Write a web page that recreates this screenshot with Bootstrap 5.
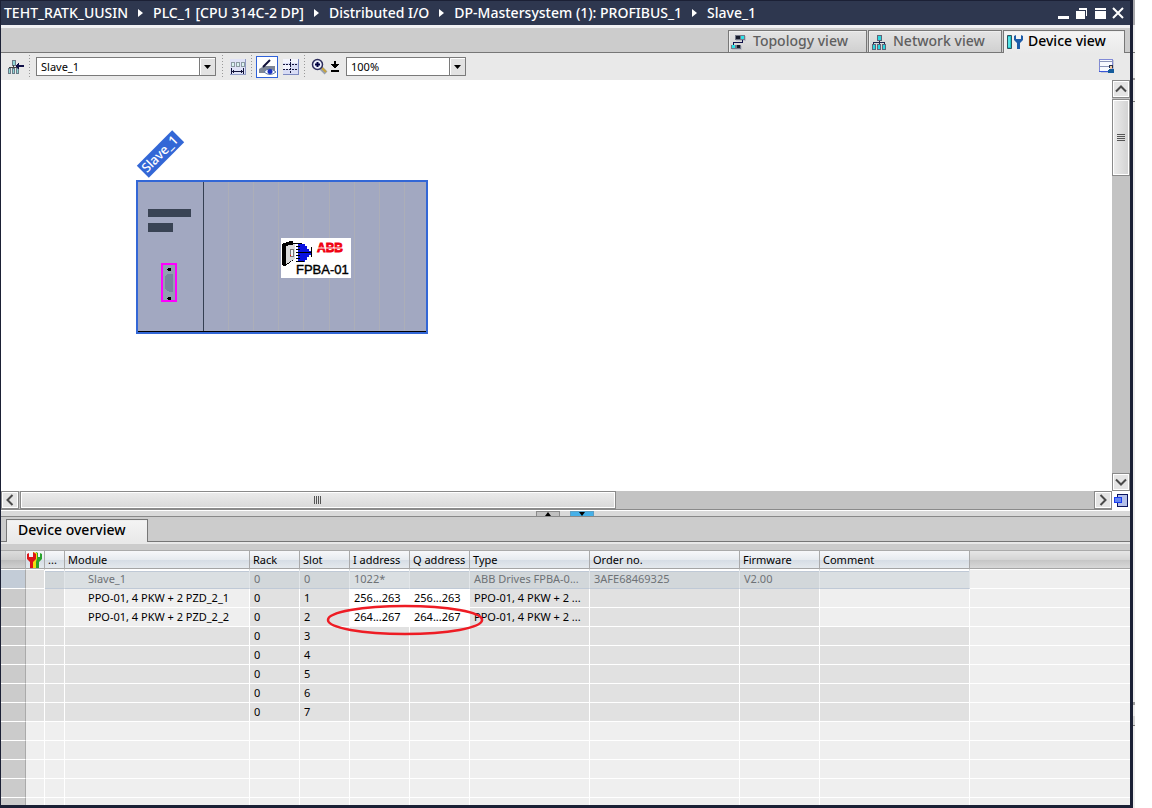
<!DOCTYPE html>
<html lang="en">
<head>
<meta charset="utf-8">
<meta name="viewport" content="width=device-width, initial-scale=1">
<title>Slave_1 - Device view</title>
<link href="https://cdn.jsdelivr.net/npm/bootstrap@5.3.0/dist/css/bootstrap.min.css" rel="stylesheet">
<style>
  body { font-family: "Noto Sans", "Open Sans", sans-serif; font-size: 11px; line-height: 16px; color: #000; background: #fff; }
  svg { display: block; flex: none; }
  a { color: inherit; text-decoration: none; }
  button { border: 0; padding: 0; background: none; color: inherit; flex: none; }
  .editor { border: solid #1b2035; border-width: 1px 3px 3px 1px; min-width: 0; }
  .behind { width: 2px; margin-right: 17px; background: linear-gradient(#a8a8ac 0 25px, #ededed 25px 52px, #777 52px 53px, #ededed 53px 78px, #999 78px 80px, #ededed 80px 101px, #777 101px 102px, #ededed 102px 702px, #999 702px 705px, #ededed 705px 716px, #d4d4d4 716px 725px, #777 725px 726px, #ededed 726px); }
  .titlebar { height: 24px; background: #2e374f; color: #fff; font-size: 14px; font-weight: 500; padding: 0 5px 0 3px; }
  .titlebar .crumbs { gap: 10px; white-space: nowrap; }
  .titlebar .winbtns { gap: 4px; }
  .lightline { height: 3px; background: #f1f1f3; flex: none; }
  .tabbar { height: 25px; background: #ccc; border-bottom: 1px solid #777; gap: 1px; padding: 0 5px; flex: none; }
  .viewtab { height: 22px; border: 1px solid #777; border-bottom: 0; font-size: 14px; font-weight: 500; color: #5f5f5f; background: linear-gradient(#e4e4e4, #d0d0d0); box-shadow: inset 1px 1px #eee; padding: 0 0 2px 1px; gap: 5px; white-space: nowrap; }
  .viewtab.active { height: 23px; margin-bottom: -1px; color: #000; background: linear-gradient(#f4f4f4, #e9e9e9); }
  .t-topo { width: 139px; } .t-net { width: 134px; } .t-dev { width: 122px; }
  .t-over { width: 142px; padding-left: 11px; }
  .tools { height: 27px; background: #e9e9e9; gap: 2px; padding: 0 12px 0 4px; flex: none; }
  .tool { width: 22px; height: 22px; display: flex; align-items: center; justify-content: center; }
  .tool.pressed { border: 1px solid #2f62d9; background: #fff; }
  .tool.slim { width: 20px; } .tool.tiny { width: 11px; justify-content: flex-start; }
  .sep { width: 1px; height: 23px; margin-right: 2px; background: repeating-linear-gradient(#999 0 1px, transparent 1px 3px); }
  .combo { position: relative; margin: 0 4px 0 2px; }
  .combo select { appearance: none; width: 100%; height: 19px; border: 1px solid #7a7a7a; border-radius: 0; background: #fff; padding: 0 18px 0 4px; font-size: 11px; line-height: 16px; color: #000; display: block; }
  .combo svg { position: absolute; right: 0; top: 0; pointer-events: none; }
  .c-dev { width: 180px; } .c-zoom { width: 120px; }
  .workspace { flex: 411 1 0; min-height: 0; }
  .canvas { position: relative; background: #fff; overflow: hidden; }
  .node { position: absolute; left: 129px; top: 45px; }
  .track { background: #c3c3c3; flex: none; }
  .vbar { width: 18px; } .hbar { height: 19px; border-bottom: 1px solid #8a8a8a; }
  .sbtn, .thumb { border: 1px solid #8a8a8a; box-shadow: inset 0 0 0 1px #fff; background: #e4e4e4; display: flex; align-items: center; justify-content: center; }
  .sbtn { width: 18px; height: 18px; }
  .vbar .thumb { height: 77px; margin-top: 1px; background: linear-gradient(90deg, #ececec, #d2d2d2); }
  .hbar .thumb { width: 596px; height: 18px; margin-left: 1px; background: linear-gradient(#ececec, #d8d8d8); }
  .corner { width: 18px; height: 19px; background: #fff; }
  .splitter { height: 7px; border-top: 1px solid #fff; border-bottom: 1px solid #888; background: #d9d9d9; padding-left: 535px; gap: 10px; flex: none; }
  .splitter button { width: 24px; height: 5px; border: solid #8a8a8a; border-width: 1px 1px 0; background: #c0c0c0; display: flex; justify-content: center; }
  .splitter .down { background: #45b0e8; border-color: #5c9fc4; }
  .strip { height: 8px; background: #ccc; border-top: 2px solid #e9e9e9; flex: none; }
  .overview { flex: 255 1 0; min-height: 0; overflow: hidden; position: relative; background: #efefef; }
  .devices { table-layout: fixed; width: 100%; border-collapse: separate; border-spacing: 0; white-space: nowrap; }
  .devices th { height: 20px; padding: 0 0 0 3px; font-weight: 400; border: solid #aaa; border-width: 1px 1px 1px 0; border-bottom: 1px solid #fff; box-shadow: inset 0 -1px #a5a5a5; background: linear-gradient(#f7f8fa, #e6eaef 50%, #d6dde5 51%, #e6eaee); }
  .devices th.plain { background: linear-gradient(#e6e6e6, #d4d4d4 50%, #c6c6c6 51%, #dadada); border-right-width: 0; }
  .devices th:first-child { border-right-width: 1px; background: linear-gradient(#dcdcdc, #ccc 50%, #bdbdbd 51%, #d2d2d2); }
  .devices th.picto { padding: 0; }
  .devices td { height: 19px; padding: 0 0 0 4px; line-height: 16px; background: #e1e1e1; border: solid #fff; border-width: 0 1px 1px 0; }
  .devices td:nth-child(4) { padding-left: 23px; }
  .devices td:first-child { background: #cbcbcb; border-right-color: #aaa; }
  .devices td:last-child, .devices .free td:not(:first-child), .devices td.soft { background: #efefef; }
  .devices td:last-child { border-right: 0; }
  .devices td.edit { background: #fff; }
  .devices .head td { color: #6e7276; }
  .devices .head td:first-child { background: #c3ccd7; }
  .devices .head td:nth-child(n+3):not(:last-child) { background: #d2d7da; border-color: #bfc9d6; border-right-color: #e2e6e9; box-shadow: inset 0 1px #fff, inset 0 2px #bfc9d6; }
  .devices .head td.soft:not(:last-child) { background: #dadfe2; }
  .marker { position: absolute; left: 325px; top: 52px; pointer-events: none; }
</style>
</head>
<body>
<div class="d-flex vh-100 overflow-hidden">
<main class="editor d-flex flex-column flex-grow-1">
  <header class="titlebar d-flex align-items-center justify-content-between flex-shrink-0">
    <nav class="crumbs d-flex align-items-center" aria-label="Path">
      <a href="#">TEHT_RATK_UUSIN</a>
      <svg width="5" height="8"><path d="M0 0L5 4L0 8Z" fill="#fff"/></svg>
      <a href="#">PLC_1 [CPU 314C-2 DP]</a>
      <svg width="5" height="8"><path d="M0 0L5 4L0 8Z" fill="#fff"/></svg>
      <a href="#">Distributed I/O</a>
      <svg width="5" height="8"><path d="M0 0L5 4L0 8Z" fill="#fff"/></svg>
      <a href="#">DP-Mastersystem (1): PROFIBUS_1</a>
      <svg width="5" height="8"><path d="M0 0L5 4L0 8Z" fill="#fff"/></svg>
      <a href="#">Slave_1</a>
    </nav>
    <div class="winbtns d-flex">
      <button aria-label="Minimize"><svg width="14" height="12"><path d="M1 9h11v3H1z" fill="#fff"/></svg></button>
      <button aria-label="Restore"><svg width="14" height="12" fill="#fff"><path d="M1 4h9v8H1z"/><path d="M4 1h8v8h-1V3H4z"/></svg></button>
      <button aria-label="Maximize"><svg width="14" height="12" fill="#fff"><path d="M2 1h11v2H2zM2 4h11v8H2z"/></svg></button>
      <button aria-label="Close"><svg width="14" height="12"><path d="M2 1l10 10M12 1L2 11" stroke="#fff" stroke-width="2"/></svg></button>
    </div>
  </header>
  <div class="lightline"></div>

  <div class="tabbar d-flex justify-content-end align-items-end" role="tablist">
    <button class="viewtab t-topo d-flex align-items-center" role="tab">
      <svg width="18" height="18" shape-rendering="crispEdges"><path d="M6 4h10v5H6zM2 14h10v4H2z" fill="#bfc1c9"/><path d="M5 3h10v5H5zM1 13h10v4H1z" fill="#747988"/><path d="M6 4h4v3H6zM7 13h3v3H7z" fill="#171b2b"/><path d="M11 4h3v3h-3zM2 13h3v3H2z" fill="#2be0e6"/><path d="M12.500 8v2.500h-9V13" fill="none" stroke="#10104a"/></svg>
      Topology view</button>
    <button class="viewtab t-net d-flex align-items-center" role="tab">
      <svg width="18" height="18" shape-rendering="crispEdges"><path d="M7 3h5v6H7zM2 12h4v6H2zM7 12h4v6H7zM12 12h4v6h-4z" fill="#5d6479"/><path d="M8 4h3v4H8zM3 13h2v4H3zM8 13h2v4H8zM13 13h2v4h-2z" fill="#2bd5dd"/><path d="M9.500 9v3M3.500 12v-1.500h11V12" fill="none" stroke="#20264c"/></svg>
      Network view</button>
    <button class="viewtab active t-dev d-flex align-items-center" role="tab" aria-selected="true">
      <svg width="18" height="18"><path d="M2.500 3.500h4v13h-4z" fill="#21c6cb" stroke="#2c5360"/><path d="M4 5v10" stroke="#8ff"/><path d="M9 4v4l3 3v6h3v-6l3-3V4l-2-1v4h-5V3z" fill="#1c5ba8"/></svg>
      Device view</button>
  </div>

  <div class="tools d-flex align-items-center">
    <button class="tool" aria-label="Network overview"><svg width="16" height="16" shape-rendering="crispEdges"><path d="M4 1h4v6H4zM0 9h3v6H0zM4 9h3v6H4zM8 9h3v6H8z" fill="#697b88"/><path d="M5 2h2v4H5zM1 10h1v4H1zM5 10h1v4H5zM9 10h1v4H9z" fill="#8fd6d6"/><path d="M1.500 9V8.500h8M5.500 6v3" stroke="#444" fill="none"/><path d="M7 7l4-4v3h5v2h-5v3z" fill="#101048"/></svg></button>
    <span class="sep"></span>
    <div class="combo c-dev"><select aria-label="Device"><option>Slave_1</option></select><svg width="17" height="19"><path d="M.5.5h16v18H.5z" fill="#e2e2e2" stroke="#7a7a7a"/><path d="M1.500 18V1.500H16" stroke="#fff" fill="none"/><path d="M5 8h7l-3.500 4z"/></svg></div>
    <span class="sep"></span>
    <button class="tool" aria-label="Show addresses"><svg width="16" height="16" shape-rendering="crispEdges"><path d="M0 0h15v15H0z" fill="#dfe2f7"/><path d="M15.500 0v16M0 15.500h16" stroke="#8f9ac4"/><path d="M1 3h4v5H1zM6 3h4v5H6zM11 3h4v5h-4z" fill="#8d9aa3"/><path d="M2 4h2v3H2zM7 4h2v3H7zM12 4h2v3h-2z" fill="#d9f2f0"/><path d="M1.500 9v6M13.500 9v6M2 12.500h12M3.500 11v3M11.500 11v3" stroke="#14143c"/></svg></button>
    <span class="sep"></span>
    <button class="tool pressed" aria-label="Show labels"><svg width="18" height="18"><path d="M1 11l5-3h11v7H1z" fill="#7f8796"/><path d="M12 2L5 9" stroke="#101038" stroke-width="2"/><path d="M6 14q5-6 12 0q-6 5-12 0z" fill="#fff" stroke="#5e79a8"/><circle cx="12" cy="13.500" r="2.500" fill="#1a2fc0"/></svg></button>
    <button class="tool" aria-label="Show grid"><svg width="16" height="16" shape-rendering="crispEdges"><path d="M0 0h16v16H0z" fill="#d8dcf5"/><path d="M0 0h7v4H0zM8 0h7v4H8zM0 6h7v4H0z" fill="#f3f4fd"/><path d="M7.500 0v16M0 5.500h16M0 10.500h16" stroke="#15153f" stroke-dasharray="2 1"/><path d="M15.500 0v16M0 15.500h16" stroke="#7d89c0"/></svg></button>
    <span class="sep"></span>
    <button class="tool slim" aria-label="Zoom"><svg width="17" height="17"><path d="M10 10l5 5" stroke="#98a0ae" stroke-width="4"/><path d="M11 10l4 4" stroke="#c9a43a" stroke-width="2"/><circle cx="6.500" cy="6.500" r="5" fill="#edf0fd" stroke="#2d2d5c" stroke-width="1.500"/><path d="M4 6.500h5M6.500 4v5" stroke="#000040" stroke-width="2"/></svg></button>
    <button class="tool tiny" aria-label="Zoom steps"><svg width="8" height="12" shape-rendering="crispEdges"><path d="M3 0h2v3h3v1H7v1H6v1H5v1H3V6H2V5H1V4H0V3h3zM0 9h8v2H0z"/></svg></button>
    <div class="combo c-zoom"><select aria-label="Zoom factor"><option>100%</option></select><svg width="17" height="19"><path d="M.5.5h16v18H.5z" fill="#e2e2e2" stroke="#7a7a7a"/><path d="M1.500 18V1.500H16" stroke="#fff" fill="none"/><path d="M5 8h7l-3.500 4z"/></svg></div>
    <button class="tool ms-auto" aria-label="Save window settings"><svg width="17" height="17" shape-rendering="crispEdges"><path d="M2 2h13v13H2z" fill="#c4c8d4"/><path d="M.5 1.500h13v12H.5z" fill="#f8f9ff" stroke="#8089d6"/><path d="M0 3.500h14M0 8.500h14" stroke="#8a93b8"/><path d="M0 13h14v1H0z" fill="#3a56d8"/><path d="M10 11h5v4H9v-3z" fill="#155c9c"/><path d="M10 7h4v3h-4z" fill="#262f4c"/><path d="M11 8h2v3h-2z" fill="#f0c9a0"/></svg></button>
  </div>

  <section class="workspace d-flex">
    <div class="canvas flex-grow-1">
      <svg class="node" width="305" height="215" viewBox="130 125 305 215">
        <g transform="rotate(-45 160.500 154)"><path d="M135.500 145.500h50v17h-50z" fill="#3367d6"/><text x="160" y="158" fill="#fff" font-size="13" font-weight="500" text-anchor="middle">Slave_1</text></g>
        <g shape-rendering="crispEdges">
          <path d="M137 181h290v152H137z" fill="#a2a8c1" stroke="#3367d6" stroke-width="2"/>
          <path d="M228.500 182v149M253.500 182v149M278.500 182v149M303.500 182v149M329.500 182v149M354.500 182v149M379.500 182v149M404.500 182v149" stroke="#acaeb8"/>
          <path d="M203.500 182v149" stroke="#353f52"/><path d="M138 331.500h288" stroke="#000"/>
          <path d="M148 209h43v8h-43zM148 223h25v9h-25z" fill="#394354"/>
          <path d="M162 264h14v37h-14z" fill="#91a0b0" stroke="#f0f" stroke-width="2"/>
          <path d="M168 268h3v3h-3zM168 297h3v3h-3zM167 269h1v1h-1zM167 298h1v1h-1z"/><path d="M167 274h6v18h-3l-5-3v-13z" fill="#76869c"/>
          <path d="M281 238h70v40h-70z" fill="#fff"/>
          <path d="M282 244l8-3h3v2h2v16l-10 7h-2l-1-3z"/>
          <path d="M286 246l9-2v15l-9 5z" fill="#dadada"/><path d="M290 249h3v7h-3z" fill="#f4f4f4" stroke="#777"/><path d="M290 255h1v1h-1z" fill="red"/>
          <path d="M298 244h7v2h2v3h2v2h2v4h-2v2h-2v3h-2v2h-7z" fill="#0a12e0"/>
          <path d="M294 243.500h8M296 246.500h4M296 249.500h4M296 252.500h15M296 255.500h4M296 258.500h4M296 261.500h8" stroke="#000"/><path d="M311.500 247v10" stroke="#000"/>
        </g>
        <text x="317" y="252" fill="#f00010" stroke="#f00010" stroke-width=".8" font-family="Liberation Sans, sans-serif" font-size="12" font-weight="700">ABB</text>
        <path d="M316 248h29" stroke="#fff"/>
        <text x="296" y="274" font-family="Liberation Sans, sans-serif" font-size="13" stroke="#000" stroke-width=".4">FPBA-01</text>
      </svg>
    </div>
    <div class="track vbar d-flex flex-column">
      <button class="sbtn" aria-label="Scroll up"><svg width="12" height="8"><path d="M1 6.500l5-5 5 5" fill="none" stroke="#4a4a4a" stroke-width="2"/></svg></button>
      <div class="thumb"><svg width="8" height="8" shape-rendering="crispEdges"><path d="M0 .5h8M0 2.500h8M0 4.500h8M0 6.500h8" stroke="#555"/></svg></div>
      <button class="sbtn mt-auto" aria-label="Scroll down"><svg width="12" height="8"><path d="M1 1.500l5 5 5-5" fill="none" stroke="#4a4a4a" stroke-width="2"/></svg></button>
    </div>
  </section>
  <div class="d-flex flex-shrink-0">
    <div class="track hbar d-flex flex-fill">
      <button class="sbtn" aria-label="Scroll left"><svg width="8" height="12"><path d="M6.500 1l-5 5 5 5" fill="none" stroke="#4a4a4a" stroke-width="2"/></svg></button>
      <div class="thumb"><svg width="8" height="8" shape-rendering="crispEdges"><path d="M.5 0v8M2.500 0v8M4.500 0v8M6.500 0v8" stroke="#555"/></svg></div>
      <button class="sbtn ms-auto" aria-label="Scroll right"><svg width="8" height="12"><path d="M1.500 1l5 5-5 5" fill="none" stroke="#4a4a4a" stroke-width="2"/></svg></button>
    </div>
    <button class="corner" aria-label="Navigator"><svg width="18" height="18" shape-rendering="crispEdges"><path d="M5.500 2.500h10v12h-10z" fill="#b4c0ea" stroke="#0b1560"/><path d="M2.500 5.500h7v5h-7z" fill="#6485f0" stroke="#1a3df0"/></svg></button>
  </div>
  <div class="splitter d-flex">
    <button aria-label="Collapse up"><svg width="6" height="4"><path d="M0 4l3-4 3 4z"/></svg></button>
    <button class="down" aria-label="Collapse down"><svg width="6" height="4"><path d="M0 0l3 4 3-4z"/></svg></button>
  </div>
  <div class="tabbar d-flex align-items-end"><button class="viewtab active t-over d-flex align-items-center" role="tab" aria-selected="true">Device overview</button></div>
  <div class="strip"></div>

  <section class="overview">
    <table class="devices">
      <colgroup><col style="width:25px"><col style="width:19px"><col style="width:20px"><col style="width:185px"><col style="width:50px"><col style="width:50px"><col style="width:60px"><col style="width:60px"><col style="width:120px"><col style="width:150px"><col style="width:80px"><col style="width:150px"><col></colgroup>
      <thead><tr><th></th><th class="picto" aria-label="Status"><svg width="18" height="18"><path d="M10 1l2 1v4h2V2l2 1v5l-3 3v6h-4V8z" fill="#2aa32c"/><path d="M7 1l4 1v5l-1 4v6H7z" fill="#f2dc10"/><path d="M1 3l2-1v4h4V1l3 2v5l-3 3v6H4v-6L1 8z" fill="#dc1418"/></svg></th><th>...</th><th>Module</th><th>Rack</th><th>Slot</th><th>I address</th><th>Q address</th><th>Type</th><th>Order no.</th><th>Firmware</th><th>Comment</th><th class="plain"></th></tr></thead>
      <tbody>
        <tr class="head"><td></td><td></td><td></td><td class="soft">Slave_1</td><td>0</td><td>0</td><td class="soft">1022*</td><td></td><td>ABB Drives FPBA-0...</td><td>3AFE68469325</td><td>V2.00</td><td class="soft"></td><td></td></tr>
        <tr><td></td><td></td><td></td><td class="soft">PPO-01, 4 PKW + 2 PZD_2_1</td><td>0</td><td>1</td><td class="edit">256...263</td><td class="edit">256...263</td><td>PPO-01, 4 PKW + 2 ...</td><td></td><td></td><td class="soft"></td><td></td></tr>
        <tr><td></td><td></td><td></td><td class="soft">PPO-01, 4 PKW + 2 PZD_2_2</td><td>0</td><td>2</td><td class="edit">264...267</td><td class="edit">264...267</td><td>PPO-01, 4 PKW + 2 ...</td><td></td><td></td><td class="soft"></td><td></td></tr>
        <tr><td></td><td></td><td></td><td></td><td>0</td><td>3</td><td></td><td></td><td></td><td></td><td></td><td></td><td></td></tr>
        <tr><td></td><td></td><td></td><td></td><td>0</td><td>4</td><td></td><td></td><td></td><td></td><td></td><td></td><td></td></tr>
        <tr><td></td><td></td><td></td><td></td><td>0</td><td>5</td><td></td><td></td><td></td><td></td><td></td><td></td><td></td></tr>
        <tr><td></td><td></td><td></td><td></td><td>0</td><td>6</td><td></td><td></td><td></td><td></td><td></td><td></td><td></td></tr>
        <tr><td></td><td></td><td></td><td></td><td>0</td><td>7</td><td></td><td></td><td></td><td></td><td></td><td></td><td></td></tr>
        <tr class="free"><td></td><td></td><td></td><td></td><td></td><td></td><td></td><td></td><td></td><td></td><td></td><td></td><td></td></tr>
        <tr class="free"><td></td><td></td><td></td><td></td><td></td><td></td><td></td><td></td><td></td><td></td><td></td><td></td><td></td></tr>
        <tr class="free"><td></td><td></td><td></td><td></td><td></td><td></td><td></td><td></td><td></td><td></td><td></td><td></td><td></td></tr>
        <tr class="free"><td></td><td></td><td></td><td></td><td></td><td></td><td></td><td></td><td></td><td></td><td></td><td></td><td></td></tr>
        <tr class="free"><td></td><td></td><td></td><td></td><td></td><td></td><td></td><td></td><td></td><td></td><td></td><td></td><td></td></tr>
      </tbody>
    </table>
    <svg class="marker" width="160" height="34"><ellipse cx="79" cy="18" rx="77" ry="14" fill="none" stroke="#ee1c24" stroke-width="2.500"/></svg>
  </section>
</main>
<div class="behind flex-shrink-0"></div>
</div>
<script src="https://cdn.jsdelivr.net/npm/bootstrap@5.3.0/dist/js/bootstrap.bundle.min.js"></script>
</body>
</html>
